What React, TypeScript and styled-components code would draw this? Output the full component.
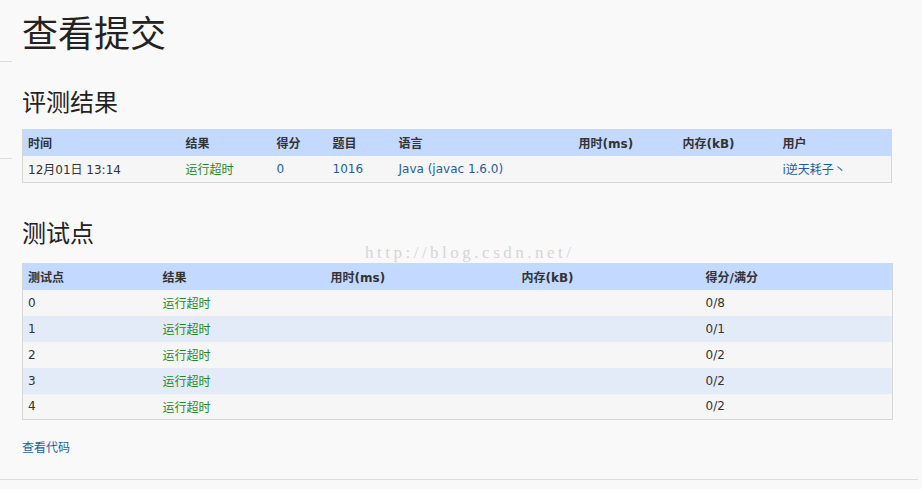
import React from "react";
import styled, { createGlobalStyle } from "styled-components";

const GlobalStyle = createGlobalStyle`
  html, body {
    margin: 0;
    padding: 0;
    background: #f9f9f9;
  }
  body {
    font-family: "DejaVu Sans", "Noto Sans CJK SC", sans-serif;
    font-size: 12px;
    color: #333;
  }
`;

const Page = styled.div`
  position: relative;
  width: 922px;
  height: 489px;
  overflow: hidden;
  display: flex;
  flex-direction: column;
`;

const Body = styled.div`
  display: grid;
  grid-template-columns: 12px 1fr;
  column-gap: 10px;
  flex: 1;
`;

const Gutter = styled.div`
  display: flex;
  flex-direction: column;
`;

const GutterRule = styled.div<{ $top: number }>`
  margin-top: ${(p) => p.$top}px;
  height: 1px;
  background: #dcdcdc;
`;

const Main = styled.main`
  display: flex;
  flex-direction: column;
  width: 870px;
`;

const Title = styled.h1`
  margin: 13px 0 0;
  font-family: "Noto Sans CJK SC", sans-serif;
  font-weight: 400;
  font-size: 36px;
  line-height: 36px;
  color: #222;
`;

const SectionTitle = styled.h2<{ $top: number }>`
  margin: ${(p) => p.$top}px 0 0;
  font-family: "Noto Sans CJK SC", sans-serif;
  font-weight: 400;
  font-size: 24px;
  line-height: 24px;
  color: #222;
`;

const Table = styled.table<{ $top: number }>`
  margin-top: ${(p) => p.$top}px;
  width: 870px;
  table-layout: fixed;
  border-collapse: collapse;
  border: 1px solid #d6d6d6;
  border-top: none;
`;

const HeadRow = styled.tr`
  background: #c3d9ff;
  height: 27px;
`;

const Th = styled.th`
  text-align: left;
  padding: 0 0 0 5px;
  font-weight: 700;
  font-size: 12px;
  color: #333;
  vertical-align: middle;
  font-family: "DejaVu Sans", "Noto Sans CJK SC", sans-serif;
`;

const Row = styled.tr<{ $alt?: boolean }>`
  height: 26px;
  background: ${(p) => (p.$alt ? "#e4ebf8" : "#f6f6f6")};
`;

const Td = styled.td<{ $tone?: "ok" | "link" }>`
  padding: 0 0 0 5px;
  font-size: 12px;
  vertical-align: middle;
  white-space: nowrap;
  color: ${(p) =>
    p.$tone === "ok" ? "#1e8a1e" : p.$tone === "link" ? "#1d5f9c" : "#333"};
`;

const CodeLink = styled.a`
  margin-top: 20px;
  font-size: 12px;
  line-height: 14px;
  color: #1d5f9c;
  text-decoration: none;
  font-family: "Noto Sans CJK SC", sans-serif;
  align-self: flex-start;
`;

const Footer = styled.div`
  height: 9px;
  border-top: 1px solid #dedede;
  margin-right: 4px;
`;

const Watermark = styled.div`
  position: absolute;
  left: 365px;
  top: 243px;
  font-family: "Liberation Serif", serif;
  font-size: 17px;
  letter-spacing: 3.5px;
  color: #d6d6d6;
  pointer-events: none;
`;

const submissionCols = [158, 91, 56, 66, 180, 104, 100, 114];
const pointCols = [135, 168, 191, 184, 192];

const points = [
  { id: "0", score: "0/8" },
  { id: "1", score: "0/1" },
  { id: "2", score: "0/2" },
  { id: "3", score: "0/2" },
  { id: "4", score: "0/2" },
];

export default function App() {
  return (
    <Page>
      <GlobalStyle />
      <Body>
        <Gutter>
          <GutterRule $top={61} />
          <GutterRule $top={96} />
        </Gutter>
        <Main>
          <Title>查看提交</Title>
          <SectionTitle $top={40}>评测结果</SectionTitle>
          <Table $top={16}>
            <colgroup>
              {submissionCols.map((w, i) => (
                <col key={i} style={{ width: w }} />
              ))}
            </colgroup>
            <thead>
              <HeadRow>
                <Th>时间</Th>
                <Th>结果</Th>
                <Th>得分</Th>
                <Th>题目</Th>
                <Th>语言</Th>
                <Th>用时(ms)</Th>
                <Th>内存(kB)</Th>
                <Th>用户</Th>
              </HeadRow>
            </thead>
            <tbody>
              <Row>
                <Td>12月01日 13:14</Td>
                <Td $tone="ok">运行超时</Td>
                <Td $tone="link">0</Td>
                <Td $tone="link">1016</Td>
                <Td $tone="link">Java (javac 1.6.0)</Td>
                <Td></Td>
                <Td></Td>
                <Td $tone="link">i逆天耗子丶</Td>
              </Row>
            </tbody>
          </Table>
          <SectionTitle $top={37}>测试点</SectionTitle>
          <Table $top={19}>
            <colgroup>
              {pointCols.map((w, i) => (
                <col key={i} style={{ width: w }} />
              ))}
            </colgroup>
            <thead>
              <HeadRow>
                <Th>测试点</Th>
                <Th>结果</Th>
                <Th>用时(ms)</Th>
                <Th>内存(kB)</Th>
                <Th>得分/满分</Th>
              </HeadRow>
            </thead>
            <tbody>
              {points.map((p, i) => (
                <Row key={p.id} $alt={i % 2 === 1}>
                  <Td>{p.id}</Td>
                  <Td $tone="ok">运行超时</Td>
                  <Td></Td>
                  <Td></Td>
                  <Td>{p.score}</Td>
                </Row>
              ))}
            </tbody>
          </Table>
          <CodeLink href="#">查看代码</CodeLink>
        </Main>
      </Body>
      <Footer />
      <Watermark>http://blog.csdn.net/</Watermark>
    </Page>
  );
}
